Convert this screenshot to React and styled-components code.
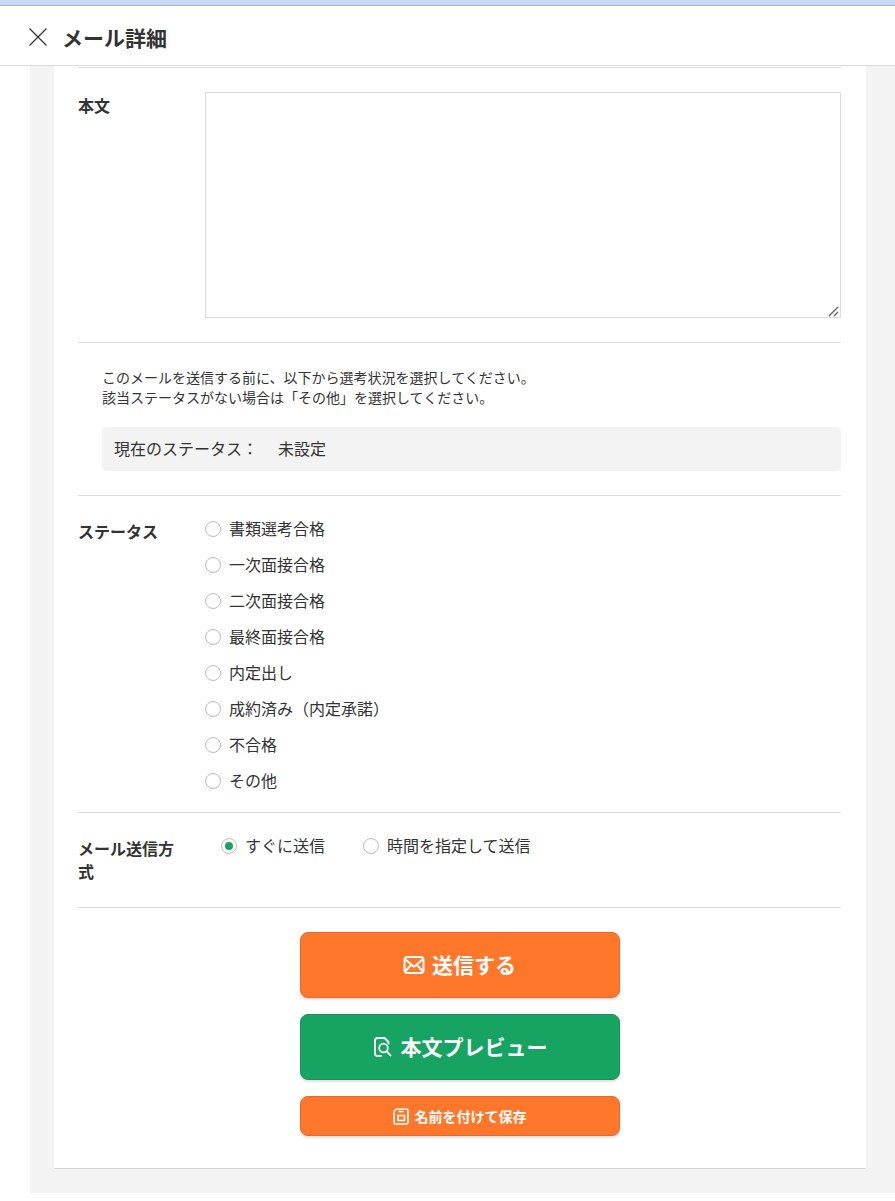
import React from 'react'
import styled, { createGlobalStyle } from 'styled-components'

const Global = createGlobalStyle`
  * { box-sizing: border-box; }
  html, body { margin: 0; padding: 0; background: #fff; }
  body {
    font-family: "Noto Sans CJK JP", "Noto Sans", sans-serif;
    color: #333;
  }
`

const statuses = [
  '書類選考合格',
  '一次面接合格',
  '二次面接合格',
  '最終面接合格',
  '内定出し',
  '成約済み（内定承諾）',
  '不合格',
  'その他',
]

const App = () => {
  return (
    <>
      <Global />
      <TopStrip />
      <Header>
        <CloseIcon viewBox="0 0 18 18">
          <path d="M0.5 0.5 L17.5 17.5 M17.5 0.5 L0.5 17.5" />
        </CloseIcon>
        <Title>メール詳細</Title>
      </Header>
      <Backdrop>
        <Card>
          <Section $pad="24px 0 24px">
            <Label $top="2px">本文</Label>
            <TextAreaWrap>
              <TextArea />
              <ResizeGrip viewBox="0 0 11 11">
                <path d="M1 10 L10 1 M6 10 L10 6" />
              </ResizeGrip>
            </TextAreaWrap>
          </Section>
          <Notice>
            <NoticeText>
              このメールを送信する前に、以下から選考状況を選択してください。
              <br />
              該当ステータスがない場合は「その他」を選択してください。
            </NoticeText>
            <CurrentStatus>
              <span>現在のステータス：</span>
              <span>未設定</span>
            </CurrentStatus>
          </Notice>
          <Section $pad="15px 0 13px">
            <Label $top="9px">ステータス</Label>
            <RadioColumn>
              {statuses.map((s) => (
                <RadioRow key={s}>
                  <Radio />
                  {s}
                </RadioRow>
              ))}
            </RadioColumn>
          </Section>
          <Section $pad="15px 0 24px">
            <Label $top="9px">メール送信方式</Label>
            <RadioInline>
              <RadioRow>
                <Radio $checked />
                すぐに送信
              </RadioRow>
              <RadioRow>
                <Radio />
                時間を指定して送信
              </RadioRow>
            </RadioInline>
          </Section>
          <Actions>
            <ActionButton $bg="#ff772b" $edge="#e8672a" $h={66} $size={21} $gap={7} $lift={2}>
              <svg width="22" height="20" viewBox="0 0 22 20" fill="none" stroke="#fff" strokeWidth="2" strokeLinejoin="round">
                <rect x="1.5" y="2" width="19" height="16" rx="3" />
                <path d="M2.5 4.5 L9.6 10.8 Q11 12 12.4 10.8 L19.5 4.5 M2.5 16 L8 10 M19.5 16 L14 10" />
              </svg>
              送信する
            </ActionButton>
            <ActionButton $bg="#17a462" $edge="#16965a" $h={66} $size={21} $gap={9} $lift={2} $shift={2}>
              <svg width="18" height="20" viewBox="0 0 18 20" fill="none" stroke="#fff" strokeWidth="1.8" strokeLinecap="round" strokeLinejoin="round">
                <path d="M7 19 H3.5 Q1 19 1 16.5 V3.5 Q1 1 3.5 1 H10.5 L14.5 5 V6.5" />
                <circle cx="9.5" cy="11" r="4.3" />
                <path d="M12.8 14.3 L16.5 18.5" />
              </svg>
              本文プレビュー
            </ActionButton>
            <ActionButton $bg="#ff772b" $edge="#e8672a" $h={40} $size={14} $gap={6} $lift={0}>
              <svg width="16" height="17" viewBox="0 0 16 17" fill="none" stroke="#fff" strokeWidth="1.6" strokeLinejoin="round">
                <path d="M3.5 1 H13 Q15 1 15 3 V14 Q15 16 13 16 H3 Q1 16 1 14 V3.5 Z" />
                <path d="M5.5 3.6 H10.5" />
                <rect x="5" y="7.5" width="6.5" height="5" />
              </svg>
              名前を付けて保存
            </ActionButton>
          </Actions>
        </Card>
      </Backdrop>
    </>
  )
}

const TopStrip = styled.div`
  height: 6px;
  background: #c8daf5;
  border-bottom: 1px solid #a9b6cf;
`

const Header = styled.header`
  height: 60px;
  display: flex;
  align-items: center;
  padding-left: 29px;
  background: #fff;
  border-bottom: 1px solid #dcdcdc;
`

const CloseIcon = styled.svg`
  width: 18px;
  height: 18px;
  margin-right: 15px;
  margin-top: 2px;
  fill: none;
  stroke: #333;
  stroke-width: 1.2;
`

const Title = styled.h1`
  margin: 3px 0 0;
  font-size: 21px;
  line-height: 30px;
  font-weight: 700;
  color: #333;
`

const Backdrop = styled.main`
  margin-left: 30px;
  height: 1127px;
  padding: 0 29px 24px 24px;
  background: #f3f3f3;
`

const Card = styled.div`
  height: 1103px;
  padding: 1px 25px 0 24px;
  background: #fff;
  border-bottom: 1px solid #d4d4d4;
`

const Section = styled.section`
  display: flex;
  align-items: flex-start;
  padding: ${(p) => p.$pad};
  border-top: 1px solid #dcdcdc;
`

const Label = styled.div`
  flex: 0 0 127px;
  padding: ${(p) => p.$top} 24px 0 0;
  font-size: 16px;
  line-height: 23px;
  font-weight: 700;
  color: #333;
`

const TextAreaWrap = styled.div`
  position: relative;
  flex: 1;
`

const TextArea = styled.textarea`
  display: block;
  width: 100%;
  height: 226px;
  padding: 8px;
  background: #fff;
  border: 1px solid #dcdcdc;
  border-radius: 0;
  outline: none;
  resize: none;
`

const ResizeGrip = styled.svg`
  position: absolute;
  right: 2px;
  bottom: 1px;
  width: 11px;
  height: 11px;
  fill: none;
  stroke: #666;
  stroke-width: 1.4;
`

const Notice = styled.section`
  padding: 24px 0 24px 24px;
  border-top: 1px solid #dcdcdc;
`

const NoticeText = styled.p`
  margin: 0 0 20px;
  font-size: 14px;
  line-height: 20px;
  color: #333;
`

const CurrentStatus = styled.div`
  display: flex;
  gap: 20px;
  height: 44px;
  align-items: center;
  padding: 0 0 3px 12px;
  font-size: 16px;
  color: #333;
  background: #f3f3f3;
  border-radius: 4px;
`

const RadioColumn = styled.div`
  display: flex;
  flex-direction: column;
`

const RadioInline = styled.div`
  display: flex;
  gap: 38px;
  padding-left: 16px;
`

const RadioRow = styled.label`
  display: flex;
  align-items: center;
  gap: 8px;
  height: 36px;
  padding-bottom: 2px;
  font-size: 16px;
  color: #333;
`

const Radio = styled.span`
  position: relative;
  width: 16px;
  height: 16px;
  margin-top: 2px;
  border-radius: 50%;
  background: #fff;
  border: 1px solid #bdbdbd;

  &::after {
    content: '';
    display: ${(p) => (p.$checked ? 'block' : 'none')};
    position: absolute;
    top: 3px;
    left: 3px;
    width: 8px;
    height: 8px;
    border-radius: 50%;
    background: #17a462;
  }
`

const Actions = styled.div`
  display: flex;
  flex-direction: column;
  align-items: center;
  gap: 16px;
  padding-top: 24px;
  border-top: 1px solid #dcdcdc;
`

const ActionButton = styled.button`
  display: flex;
  align-items: center;
  justify-content: center;
  gap: ${(p) => p.$gap}px;
  width: 320px;
  height: ${(p) => p.$h}px;
  padding: 0 0 ${(p) => p.$lift}px ${(p) => p.$shift || 0}px;
  font-family: inherit;
  font-size: ${(p) => p.$size}px;
  font-weight: 700;
  color: #fff;
  background: ${(p) => p.$bg};
  border: 1px solid ${(p) => p.$edge};
  border-radius: 8px;
  box-shadow: 0 2px 2px rgba(0, 0, 0, 0.12);

  svg {
    margin-top: ${(p) => p.$lift}px;
  }
`

export default App
